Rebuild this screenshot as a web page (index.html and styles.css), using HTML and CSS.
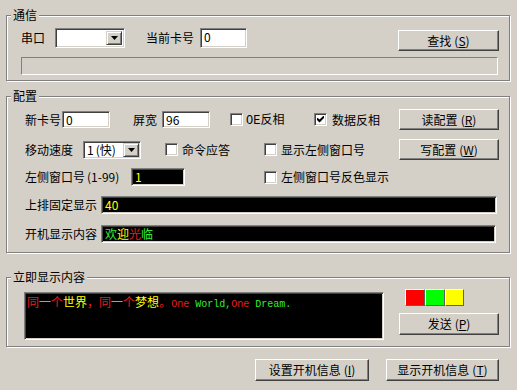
FILE: index.html
```html
<!DOCTYPE html>
<html lang="zh">
<head>
<meta charset="utf-8">
<title>LED 配置</title>
<link rel="stylesheet" href="styles.css">
</head>
<body>
<div class="win">
  <section class="group g1">
    <span class="legend">通信</span>
    <div class="row r-com">
      <span class="lbl w-port">串口</span>
      <div class="combo c-port"><span class="cv"></span><span class="dd"><svg width="7" height="4" viewBox="0 0 7 4"><path d="M0 0H7L3.5 4Z" fill="#000"/></svg></span></div>
      <span class="lbl w-cur">当前卡号</span>
      <div class="field f-cur">0</div>
      <button class="btn b-find">查找<span class="acc">(<u>S</u>)</span></button>
    </div>
    <div class="progress"></div>
  </section>

  <section class="group g2">
    <span class="legend">配置</span>
    <div class="row r1">
      <span class="lbl w-new">新卡号</span>
      <div class="field f-small">0</div>
      <span class="lbl w-width">屏宽</span>
      <div class="field f-small">96</div>
      <span class="chk ml-oe"></span>
      <span class="lbl w-oe"><span class="latin">OE</span>反相</span>
      <span class="chk checked"><svg width="7" height="7" viewBox="0 0 7 7"><path d="M0 2.5L2.5 5L7 0.5" stroke="#000" stroke-width="2" fill="none"/></svg></span>
      <span class="lbl w-data">数据反相</span>
      <button class="btn b-side">读配置<span class="acc">(<u>R</u>)</span></button>
    </div>
    <div class="row r2">
      <span class="lbl w-speed">移动速度</span>
      <div class="combo c-speed"><span class="cv">1<span class="acc">(快)</span></span><span class="dd"><svg width="7" height="4" viewBox="0 0 7 4"><path d="M0 0H7L3.5 4Z" fill="#000"/></svg></span></div>
      <span class="chk ml-cmd"></span>
      <span class="lbl w-cmd">命令应答</span>
      <span class="chk"></span>
      <span class="lbl w-show">显示左侧窗口号</span>
      <button class="btn b-side">写配置<span class="acc">(<u>W</u>)</span></button>
    </div>
    <div class="row r3">
      <span class="lbl w-left">左侧窗口号<span class="acc">(1-99)</span></span>
      <div class="field dark f-win"><span class="y">1</span></div>
      <span class="chk ml-inv"></span>
      <span class="lbl w-inv">左侧窗口号反色显示</span>
    </div>
    <div class="row r4">
      <span class="lbl w-top">上排固定显示</span>
      <div class="field dark f-wide"><span class="y">40</span></div>
    </div>
    <div class="row r5">
      <span class="lbl w-top">开机显示内容</span>
      <div class="field dark f-wide2"><span class="g">欢</span><span class="y">迎</span><span class="r">光</span><span class="g">临</span></div>
    </div>
  </section>

  <section class="group g3">
    <span class="legend">立即显示内容</span>
    <div class="display"><span class="r">同</span><span class="g">一</span><span class="r">个</span><span class="y">世界</span><span class="r">，同</span><span class="g">一</span><span class="r">个</span><span class="y">梦想</span><span class="r">。</span><span class="mono"><span class="r">One</span> <span class="g">World,</span><span class="r">One</span> <span class="g">Dream.</span></span></div>
    <div class="side">
      <div class="swatches">
        <span class="sw sw-r"></span><span class="sw sw-g"></span><span class="sw sw-y"></span>
      </div>
      <button class="btn b-send">发送<span class="acc">(<u>P</u>)</span></button>
    </div>
  </section>

  <div class="footer">
    <button class="btn b-set">设置开机信息<span class="acc">(<u>I</u>)</span></button>
    <button class="btn b-disp">显示开机信息<span class="acc">(<u>T</u>)</span></button>
  </div>
</div>
</body>
</html>
```

FILE: styles.css
```css
* { box-sizing: border-box; }
html, body {
  margin: 0;
  padding: 0;
  background: #d4d0c8;
  width: 517px;
  height: 390px;
  overflow: hidden;
}
body {
  font-family: "Noto Sans CJK SC", "Noto Sans", sans-serif;
  font-size: 12px;
  color: #000;
}
.win {
  padding: 15px 0 0 6px;
}
.group {
  position: relative;
  width: 504px;
  border: 1px solid #808080;
  box-shadow: inset 1px 1px #fff, 1px 1px #fff;
}
.legend {
  position: absolute;
  top: -9px;
  left: 4px;
  padding: 0 2px;
  background: #d4d0c8;
  line-height: 16px;
  font-size: 12px;
}
.row {
  display: flex;
  align-items: center;
}
.lbl {
  white-space: nowrap;
  line-height: 16px;
  flex: none;
}
.acc { margin-left: 3px; }
.latin { font-family: "Liberation Mono", "DejaVu Sans Mono", monospace; font-size: 12px; }

/* group 1 */
.g1 { padding: 12px 0 5px 14px; }
.r-com { align-items: flex-start; }
.r-com .lbl { line-height: 20px; }
.w-port { width: 34px; }
.w-cur { width: 54px; margin-left: 21px; }
.c-port { width: 70px; height: 20px; }
.f-cur { width: 47px; height: 20px; line-height: 16px; }
.b-find { width: 101px; height: 21px; margin-left: 151px; margin-top: 2px; }
.progress {
  margin-top: 6px;
  width: 477px;
  height: 18px;
  border: 1px solid;
  border-color: #808080 #fff #fff #808080;
}

/* controls */
.field {
  flex: none;
  background: #fff;
  border: 1px solid;
  border-color: #808080 #fff #fff #808080;
  box-shadow: inset 1px 1px #404040, inset -1px -1px #d4d0c8;
  padding: 1px 3px;
  line-height: 13px;
  white-space: nowrap;
  overflow: hidden;
}
.field.dark { background: #000; }
.combo {
  flex: none;
  display: flex;
  background: #fff;
  border: 1px solid;
  border-color: #808080 #fff #fff #808080;
  box-shadow: inset 1px 1px #404040, inset -1px -1px #d4d0c8;
  padding: 2px;
}
.combo .cv {
  flex: 1;
  line-height: 14px;
  padding-left: 1px;
  white-space: nowrap;
}
.combo .cv .acc { margin-left: 2px; }
.combo .dd {
  flex: none;
  width: 16px;
  background: #d4d0c8;
  border: 1px solid;
  border-color: #d4d0c8 #404040 #404040 #d4d0c8;
  box-shadow: inset 1px 1px #fff, inset -1px -1px #808080;
  display: flex;
  align-items: center;
  justify-content: center;
}
.chk {
  flex: none;
  width: 13px;
  height: 13px;
  background: #fff;
  border: 1px solid;
  border-color: #808080 #fff #fff #808080;
  box-shadow: inset 1px 1px #404040, inset -1px -1px #d4d0c8;
  display: flex;
  align-items: center;
  justify-content: center;
}
.btn {
  flex: none;
  font: inherit;
  color: #000;
  background: #d4d0c8;
  border: 1px solid;
  border-color: #fff #404040 #404040 #fff;
  box-shadow: inset -1px -1px #808080;
  padding: 0;
  line-height: 16px;
  text-align: center;
}
.btn u { text-decoration: underline; }

/* group 2 */
.g2 { margin-top: 15px; padding: 12px 0 9px 18px; }
.r1, .r2 { height: 21px; }
.r2 { margin-top: 9px; }
.r3 { margin-top: 8px; height: 18px; }
.r4 { margin-top: 10px; height: 18px; }
.r5 { margin-top: 11px; height: 18px; }
.w-new { width: 37px; }
.f-small { width: 48px; height: 17px; }
.w-width { width: 29px; margin-left: 23px; }
.ml-oe { margin-left: 20px; }
.w-oe { width: 68px; margin-left: 3px; }
.w-data { width: 67px; margin-left: 5px; }
.b-side { width: 100px; height: 21px; }
.w-speed { width: 58px; }
.c-speed { width: 58px; height: 18px; padding: 1px 1px 1px 2px; }
.c-speed .cv { line-height: 14px; }
.ml-cmd { margin-left: 24px; }
.w-cmd { width: 82px; margin-left: 4px; }
.w-show { width: 118px; margin-left: 4px; }
.w-left { width: 106px; }
.w-left .acc { margin-left: 2px; }
.f-win { width: 54px; height: 18px; }
.ml-inv { margin-left: 79px; }
.w-inv { margin-left: 4px; }
.w-top { width: 76px; }
.f-wide { width: 396px; height: 18px; }
.f-wide2 { width: 395px; height: 18px; }

.y { color: #ffff00; }
.g { color: #33ee33; }
.r { color: #ee1c1c; }

/* group 3 */
.g3 {
  margin-top: 24px;
  display: flex;
  align-items: flex-start;
  padding: 11px 0 6px 17px;
}
.display {
  flex: none;
  width: 360px;
  height: 48px;
  margin-top: 3px;
  background: #000;
  border: 1px solid;
  border-color: #808080 #fff #fff #808080;
  box-shadow: inset 1px 1px #404040, inset -1px -1px #d4d0c8;
  padding: 2px 2px 0 2px;
  line-height: 14px;
  white-space: nowrap;
}
.mono {
  font-family: "Liberation Mono", "DejaVu Sans Mono", monospace;
  font-size: 10px;
}
.side {
  flex: none;
  width: 100px;
  margin-left: 15px;
}
.swatches {
  display: flex;
  margin-left: 6px;
  height: 17px;
}
.sw {
  width: 20px;
  height: 17px;
  border: 1px solid;
  border-color: #fff #606060 #606060 #fff;
}
.sw-r { background: #ff0000; }
.sw-g { background: #00ff00; }
.sw-y { background: #ffff00; width: 19px; }
.b-send { width: 100px; height: 22px; margin-top: 7px; }

/* footer */
.footer {
  display: flex;
  justify-content: flex-end;
  gap: 17px;
  margin-top: 12px;
  width: 493px;
}
.b-set { width: 114px; height: 22px; }
.b-disp { width: 113px; height: 22px; }
```
